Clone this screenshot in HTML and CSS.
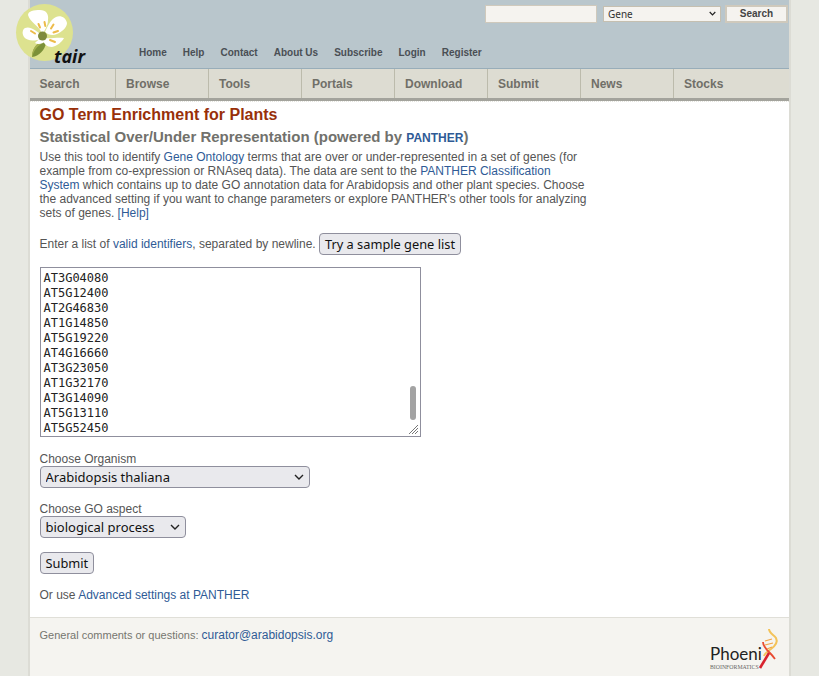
FILE: index.html
```html
<!DOCTYPE html>
<html lang="en">
<head>
<meta charset="utf-8">
<title>GO Term Enrichment for Plants</title>
<link rel="stylesheet" href="styles.css">
</head>
<body>
<div class="page">
  <header class="masthead">
    <svg class="logo" width="80" height="70" viewBox="0 0 80 70">
      <circle cx="34.5" cy="32.5" r="28.5" fill="#dde28f"/>
      <path d="M31 42C26 44 22 50 22 57C29 56 35 50 36 43z" fill="#7c9138"/>
      <path d="M30 42C25 45 22 50 22 57C24 50 27 47 31 44z" fill="#a3b04f"/>
      <path d="M32 33C28 25 20 22 18 15C18 11 24 10 30 10C36 10 39 14 38 20C38 25 35 30 33 33z" fill="#fff"/>
      <path d="M35 32C38 26 40 20 46 17C51 15 56 18 57 23C57 28 51 32 47 34C43 36 38 35 35 32z" fill="#fff"/>
      <path d="M32 36C26 30 20 26 15 28C12 30 12 34 14 37C17 41 25 42 32 38z" fill="#fff"/>
      <path d="M33 38C40 39 48 37 54 38C52 42 47 46 42 47C37 47 33 44 33 38z" fill="#fff"/>
      <path d="M30 38C28 40 26 42 25 43C28 45 33 44 35 41z" fill="#fff"/>
      <circle cx="32.5" cy="36" r="4.5" fill="#7f8a3c"/>
      <g stroke="#edbb4a" stroke-width="2" stroke-linecap="round">
        <path d="M28.500 24L30 27.500M34.500 22L35.300 26M43.500 24.500L41 28.500M48 31L43.500 32.500M40 40L45 42M21 31L25 33.500"/>
      </g>
    </svg>
    <span class="tair">tair</span>
    <div class="search-row">
      <input class="search-input" type="text" aria-label="Search">
      <span class="select-wrap select-wrap-small">
        <select class="search-select" aria-label="Type"><option>Gene</option></select>
        <svg class="chev chev-small" width="7" height="5" viewBox="0 0 7 5"><path d="M.7 1l2.800 2.800L6.300 1" fill="none" stroke="#222" stroke-width="1.200"/></svg>
      </span>
      <button class="search-button" type="button">Search</button>
    </div>
    <nav class="top-links">
      <a>Home</a><a>Help</a><a>Contact</a><a>About Us</a><a>Subscribe</a><a>Login</a><a>Register</a>
    </nav>
  </header>
  <nav class="tabs">
    <a class="tab tab-a">Search</a>
    <a class="tab">Browse</a>
    <a class="tab">Tools</a>
    <a class="tab">Portals</a>
    <a class="tab">Download</a>
    <a class="tab">Submit</a>
    <a class="tab">News</a>
    <a class="tab tab-last">Stocks</a>
  </nav>
  <main class="content">
    <h1>GO Term Enrichment for Plants</h1>
    <h2>Statistical Over/Under Representation (powered by <a class="panther">PANTHER</a>)</h2>
    <p class="intro">Use this tool to identify <a>Gene Ontology</a> terms that are over or under-represented in a set of genes (for example from co-expression or RNAseq data). The data are sent to the <a>PANTHER Classification System</a> which contains up to date GO annotation data for Arabidopsis and other plant species. Choose the advanced setting if you want to change parameters or explore PANTHER's other tools for analyzing sets of genes. <a>[Help]</a></p>
    <div class="enter-row">Enter a list of <a>valid identifiers</a>, separated by newline. <button class="btn" type="button">Try a sample gene list</button></div>
    <div class="gene-box">
      <div class="gene-text">AT3G04080
AT5G12400
AT2G46830
AT1G14850
AT5G19220
AT4G16660
AT3G23050
AT1G32170
AT3G14090
AT5G13110
AT5G52450</div>
      <span class="scroll-thumb"></span>
      <svg class="grip" width="11" height="11" viewBox="0 0 11 11"><path d="M1 10L10 1M4 10l6-6M7 10l3-3" stroke="#777" stroke-width="1" fill="none"/></svg>
    </div>
    <label class="field-label">Choose Organism</label>
    <span class="select-wrap">
      <select class="pick pick-org" aria-label="Choose Organism"><option>Arabidopsis thaliana</option></select>
      <svg class="chev" width="10" height="6" viewBox="0 0 10 6"><path d="M1 1l4 4 4-4" fill="none" stroke="#222" stroke-width="1.400"/></svg>
    </span>
    <label class="field-label label-go">Choose GO aspect</label>
    <span class="select-wrap">
      <select class="pick pick-go" aria-label="Choose GO aspect"><option>biological process</option></select>
      <svg class="chev" width="10" height="6" viewBox="0 0 10 6"><path d="M1 1l4 4 4-4" fill="none" stroke="#222" stroke-width="1.400"/></svg>
    </span>
    <div class="submit-row"><button class="btn" type="button">Submit</button></div>
    <p class="advanced">Or use <a>Advanced settings at PANTHER</a></p>
  </main>
  <footer class="footer">
    <p class="comments">General comments or questions: <a>curator@arabidopsis.org</a></p>
    <div class="phoenix">
      <span class="ph-name">Phoeni</span>
      <span class="ph-sub">BIOINFORMATICS</span>
      <svg class="dna" width="30" height="46" viewBox="0 0 30 46">
        <path d="M12 1C12 5 17 7 19 10C21 14 18 18 14 21C11 23 8 25 7 28" fill="none" stroke="#f3c35a" stroke-width="2"/>
        <path d="M6 14C6 18 9 21 12 24C14 26 16 28 18 31" fill="none" stroke="#e84b32" stroke-width="1.800"/>
        <path d="M12 25C9 30 6 35 3 40" fill="none" stroke="#d8232e" stroke-width="2.600"/>
        <path d="M8 13L15 11M8 17L16 15M10 21L15 19" stroke="#f2a544" stroke-width="1.200"/>
      </svg>
    </div>
  </footer>
</div>
</body>
</html>
```
FILE: styles.css
```css
* { box-sizing: border-box; }
html, body { margin: 0; padding: 0; }
body {
  height: 676px;
  overflow: hidden;
  background: #e7e8e2;
  font-family: "Liberation Sans", Arial, sans-serif;
  font-size: 12px;
  color: #555;
}
a { color: #2f5b96; }
.page {
  width: 759.5px;
  margin-left: 29.5px;
  height: 676px;
  background: #fff;
  box-shadow: 0 0 0 2px #dcdcd5;
  display: flex;
  flex-direction: column;
  position: relative;
}
.masthead {
  height: 69px;
  background: #b9c6cc;
  border-bottom: 1px solid #98adb9;
  flex: none;
  position: relative;
}
.logo { position: absolute; left: -19.5px; top: 0; }
.tair {
  position: absolute;
  left: 24.5px;
  top: 44px;
  font-family: "Open Sans", "Liberation Sans", sans-serif;
  font-style: italic;
  font-weight: 700;
  font-size: 18px;
  line-height: 24px;
  color: #111;
}
.search-row {
  position: absolute;
  right: 1px;
  top: 5px;
  display: flex;
  align-items: flex-start;
}
.search-input {
  width: 112px;
  height: 18px;
  padding: 0;
  background: #f5f3ef;
  border: 1px solid #cfc9bc;
}
.select-wrap { display: block; position: relative; width: max-content; }
.select-wrap-small { margin-left: 6px; margin-top: 1px; }
.chev { position: absolute; right: 6px; top: 8px; pointer-events: none; }
.chev-small { right: 5px; top: 5px; }
.search-select {
  display: block;
  appearance: none;
  width: 118px;
  height: 16px;
  padding: 0 0 0 4px;
  background: #f5f3ef;
  border: 1px solid #c5bfb0;
  border-radius: 0;
  font-family: "Noto Sans", sans-serif;
  font-size: 10px;
  line-height: 14px;
  color: #333;
}
.search-button {
  width: 63px;
  height: 18px;
  margin-left: 4px;
  padding: 0 0 1px;
  background: #f5f3ef;
  border: 2px solid #cfc9bc;
  font-family: "Liberation Sans", sans-serif;
  font-weight: 700;
  font-size: 10px;
  color: #444;
}
.top-links {
  position: absolute;
  left: 109.5px;
  top: 46px;
  display: flex;
  gap: 16px;
  font-size: 10px;
  font-weight: 700;
  line-height: 13px;
}
.top-links a { color: #4a4f55; }
.tabs {
  height: 32px;
  flex: none;
  display: flex;
  background: #dddcd2;
  border-bottom: 3px solid #a3a39c;
}
.tab {
  width: 93px;
  border-right: 1px solid #bcbbac;
  padding: 8px 0 0 10px;
  font-size: 12px;
  font-weight: 700;
  line-height: 14px;
  color: #706f68;
}
.tab-a { width: 86.5px; }
.tab-last { flex: 1; border-right: 0; }
.content {
  flex: 1;
  padding: 3px 10px 0;
  border-top: 1px dotted #e4e4de;
}
h1 {
  margin: 0;
  font-size: 16px;
  line-height: 20px;
  font-weight: 700;
  color: #983009;
}
h2 {
  margin: 3px 0 0;
  font-size: 15px;
  line-height: 18px;
  font-weight: 700;
  color: #71716c;
}
.panther { font-size: 12px; }
.intro {
  margin: 3px 0 0;
  width: 553px;
  font-size: 12px;
  line-height: 14px;
}
.enter-row {
  margin-top: 13px;
  height: 22px;
  display: flex;
  align-items: center;
  white-space: pre-wrap;
  line-height: 14px;
}
.btn {
  height: 22px;
  padding: 0 5px 1px;
  background: #e9e9ed;
  border: 1px solid #8f8f9d;
  border-radius: 4px;
  font-family: "Noto Sans", sans-serif;
  font-size: 12.8px;
  line-height: 14px;
  color: #111;
}
.gene-box {
  position: relative;
  margin-top: 12px;
  width: 381px;
  height: 170px;
  background: #fff;
  border: 1px solid #8f8f9d;
  overflow: hidden;
}
.gene-text {
  padding: 3px 0 0 3px;
  white-space: pre;
  font-family: "DejaVu Sans Mono", monospace;
  font-size: 12px;
  line-height: 15px;
  color: #222;
}
.scroll-thumb {
  position: absolute;
  right: 4px;
  top: 118px;
  width: 6px;
  height: 34px;
  background: #a3a3a3;
  border-radius: 3px;
}
.grip { position: absolute; right: 1px; bottom: 1px; }
.field-label {
  display: block;
  margin-top: 15px;
  font-size: 12px;
  line-height: 14px;
}
.label-go { margin-top: 14px; }
.pick {
  display: block;
  appearance: none;
  height: 22px;
  padding: 0 0 0 5px;
  background: #e9e9ed;
  border: 1px solid #8f8f9d;
  border-radius: 4px;
  font-family: "Noto Sans", sans-serif;
  font-size: 13px;
  color: #111;
}
.pick-org { width: 270px; }
.pick-go { width: 146px; }
.submit-row { margin-top: 14px; }
.advanced { margin: 14px 0 0; line-height: 14px; }
.footer {
  flex: none;
  height: 59px;
  background: #f5f4f0;
  border-top: 1px solid #e0dfd8;
  position: relative;
  padding: 10px 10px 0;
}
.comments {
  margin: 0;
  font-size: 11px;
  line-height: 14px;
  color: #76766f;
}
.comments a { font-size: 12px; }
.phoenix { position: absolute; left: 679.5px; top: 10px; width: 76px; height: 46px; }
.dna { position: absolute; left: 48px; top: 0; }
.ph-name {
  position: absolute;
  left: 1px;
  top: 15px;
  font-family: "Lato", "Liberation Sans", sans-serif;
  font-size: 17px;
  line-height: 22px;
  color: #222;
}
.ph-sub {
  position: absolute;
  left: 1px;
  top: 35px;
  font-family: "Liberation Serif", serif;
  font-size: 5.8px;
  line-height: 8px;
  color: #666;
}
```
